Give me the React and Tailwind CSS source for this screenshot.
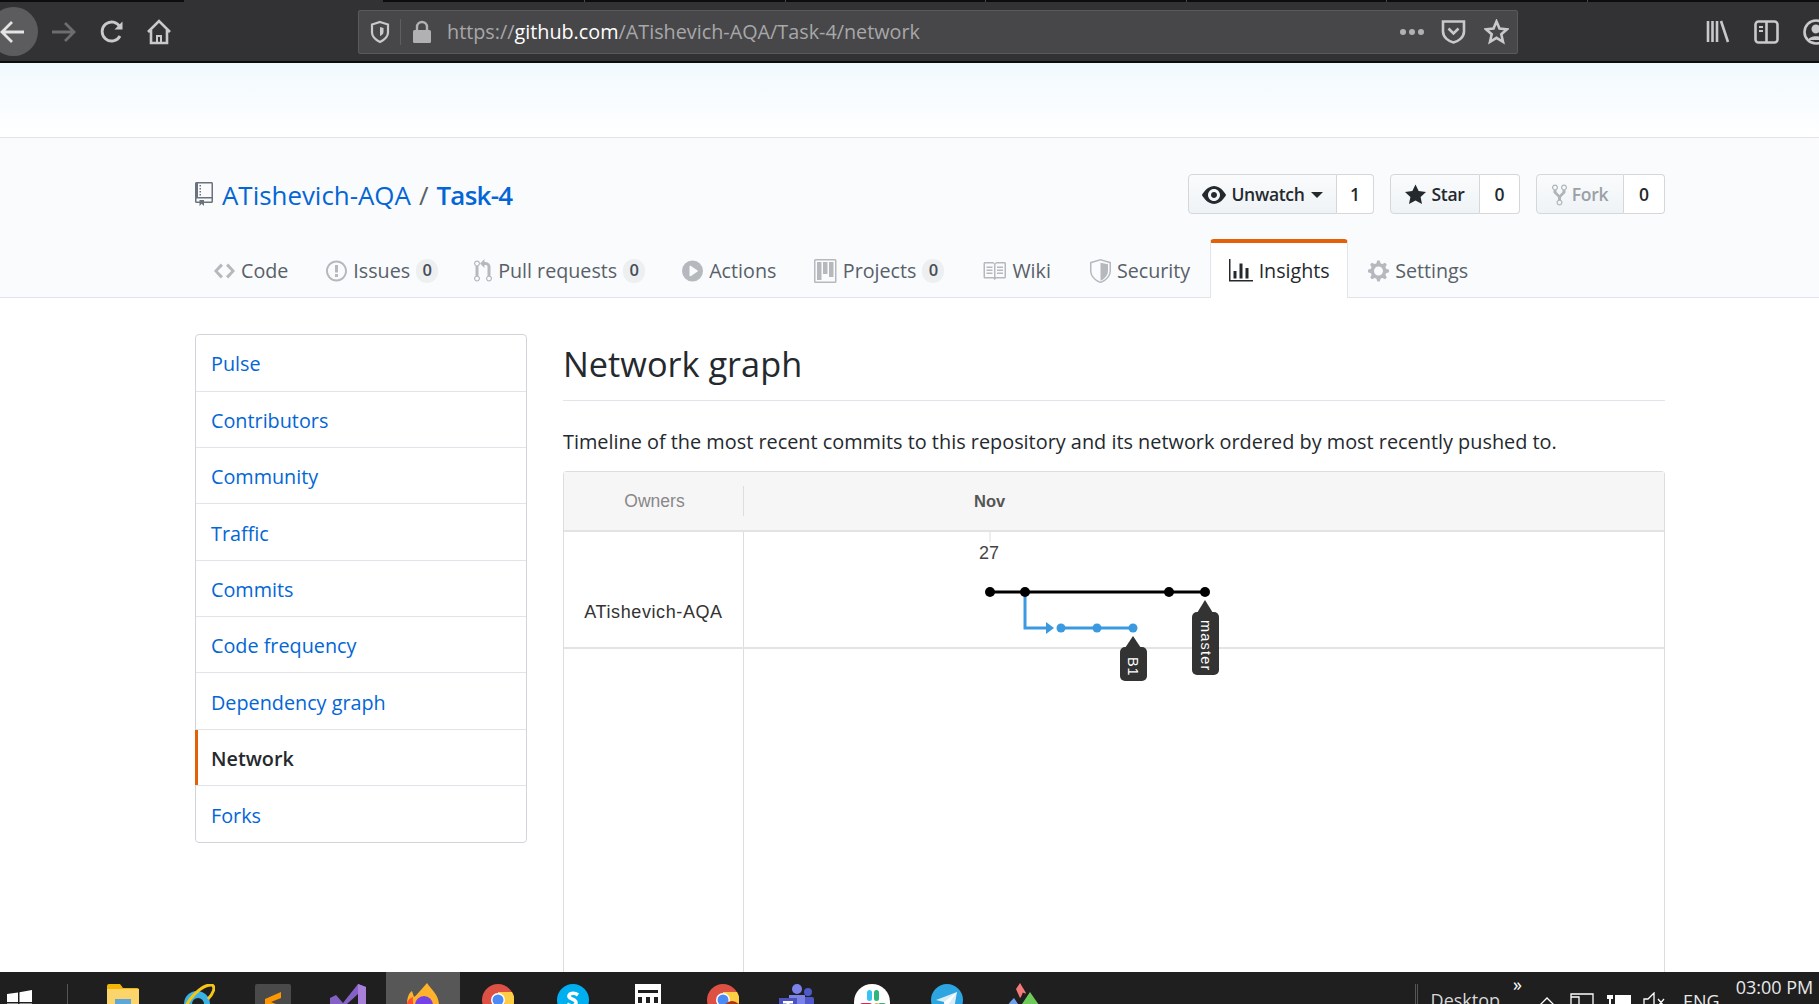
import React from "react";

const Oct = ({ d, w = 16, h = 16, className = "", size = 24 }) => (
  <svg viewBox={`0 0 ${w} ${h}`} width={(size * w) / h} height={size} className={`shrink-0 fill-current ${className}`}>
    <path d={d} fillRule="evenodd" />
  </svg>
);

const P = {
  repo: "M4 9H3V8h1v1zm0-3H3v1h1V6zm0-2H3v1h1V4zm0-2H3v1h1V2zm8-1v12c0 .55-.45 1-1 1H6v2l-1.5-1.5L3 16v-2H1c-.55 0-1-.45-1-1V1c0-.55.45-1 1-1h10c.55 0 1 .45 1 1zm-1 10H1v2h2v-1h3v1h5v-2zm0-10H2v9h9V1z",
  code: "M9.5 3L8 4.5 11.5 8 8 11.5 9.5 13 14 8 9.5 3zm-5 0L0 8l4.5 5L6 11.5 2.5 8 6 4.5 4.5 3z",
  issue: "M7 2.3c3.14 0 5.7 2.56 5.7 5.7s-2.56 5.7-5.7 5.7A5.71 5.71 0 011.3 8c0-3.14 2.56-5.7 5.7-5.7zM7 1C3.14 1 0 4.14 0 8s3.14 7 7 7 7-3.14 7-7-3.14-7-7-7zm1 3H6v5h2V4zm0 6H6v2h2v-2z",
  pr: "M11 11.28V5c-.03-.78-.34-1.47-.94-2.06C9.46 2.35 8.78 2.03 8 2H7V0L4 3l3 3V4h1c.27.02.48.11.69.31.21.2.3.42.31.69v6.28A1.993 1.993 0 0010 15a1.993 1.993 0 001-3.72zm-1 2.92c-.66 0-1.2-.55-1.2-1.2 0-.65.55-1.2 1.2-1.2.65 0 1.2.55 1.2 1.2 0 .65-.55 1.2-1.2 1.2zM4 3c0-1.11-.89-2-2-2a1.993 1.993 0 00-1 3.72v6.56A1.993 1.993 0 002 15a1.993 1.993 0 001-3.72V4.72c.59-.34 1-.98 1-1.72zm-.8 10c0 .66-.55 1.2-1.2 1.2-.65 0-1.2-.55-1.2-1.2 0-.65.55-1.2 1.2-1.2.65 0 1.2.55 1.2 1.2zM2 4.2C1.34 4.2.8 3.65.8 3c0-.65.55-1.2 1.2-1.2.65 0 1.2.55 1.2 1.2 0 .65-.55 1.2-1.2 1.2z",
  play: "M14 8A7 7 0 110 8a7 7 0 0114 0zm-8.223 3.482l4.599-3.066a.5.5 0 000-.832L5.777 4.518A.5.5 0 005 4.934v6.132a.5.5 0 00.777.416z",
  project: "M10 12h3V2h-3v10zm-4-2h3V2H6v8zm-4 4h3V2H2v12zm-1 1h13V1H1v14zM14 0H1a1 1 0 00-1 1v14a1 1 0 001 1h13a1 1 0 001-1V1a1 1 0 00-1-1z",
  book: "M3 5h4v1H3V5zm0 3h4V7H3v1zm0 2h4V9H3v1zm11-5h-4v1h4V5zm0 2h-4v1h4V7zm0 2h-4v1h4V9zm2-6v9c0 .55-.45 1-1 1H9.5l-1 1-1-1H2c-.55 0-1-.45-1-1V3c0-.55.45-1 1-1h5.5l1 1 1-1H15c.55 0 1 .45 1 1zm-8 .5L7.5 3H2v9h6V3.5zm7-.5H9.5l-.5.5V12h6V3z",
  shield: "M7 0L0 2v6.02C0 12.69 5.31 16 7 16c1.69 0 7-3.31 7-7.98V2L7 0zm0 1.05L13 2.77v5.25C13 12 8.4 14.9 7 15c-1.4-.1-6-3-6-6.98V2.77L7 1.05zM7 2.5v12C8.5 14 12 11.5 12 8V3.5L7 2.5z",
  graph: "M16 14v1H0V0h1v14h15zM5 13H3V8h2v5zm4 0H7V3h2v10zm4 0h-2V6h2v7z",
  gear: "M14 8.77v-1.6l-1.94-.64-.45-1.09.88-1.84-1.13-1.13-1.81.91-1.09-.45-.69-1.92h-1.6l-.63 1.94-1.11.45-1.84-.88-1.13 1.13.91 1.81-.45 1.09L0 7.23v1.59l1.94.64.45 1.09-.88 1.84 1.13 1.13 1.81-.91 1.09.45.69 1.92h1.59l.63-1.94 1.11-.45 1.84.88 1.13-1.13-.92-1.81.47-1.09L14 8.75v.02zM7 11c-1.66 0-3-1.34-3-3s1.34-3 3-3 3 1.34 3 3-1.34 3-3 3z",
  eye: "M8.06 2C3 2 0 8 0 8s3 6 8.06 6C13 14 16 8 16 8s-3-6-7.94-6zM8 12c-2.2 0-4-1.78-4-4 0-2.2 1.8-4 4-4 2.22 0 4 1.8 4 4 0 2.22-1.78 4-4 4zm2-4c0 1.11-.89 2-2 2-1.11 0-2-.89-2-2 0-1.11.89-2 2-2 1.11 0 2 .89 2 2z",
  star: "M14 6l-4.9-.64L7 1 4.9 5.36 0 6l3.6 3.26L2.67 14 7 11.67 11.33 14l-.93-4.74L14 6z",
  fork: "M8 1a1.993 1.993 0 00-1 3.72V6L5 8 3 6V4.72A1.993 1.993 0 002 1a1.993 1.993 0 00-1 3.72V6.5l3 3v1.78A1.993 1.993 0 005 15a1.993 1.993 0 001-3.72V9.5l3-3V4.72A1.993 1.993 0 008 1zM2 4.2C1.34 4.2.8 3.65.8 3c0-.65.55-1.2 1.2-1.2.65 0 1.2.55 1.2 1.2 0 .65-.55 1.2-1.2 1.2zm3 10c-.66 0-1.2-.55-1.2-1.2 0-.65.55-1.2 1.2-1.2.65 0 1.2.55 1.2 1.2 0 .65-.55 1.2-1.2 1.2zm3-10c-.66 0-1.2-.55-1.2-1.2 0-.65.55-1.2 1.2-1.2.65 0 1.2.55 1.2 1.2 0 .65-.55 1.2-1.2 1.2z",
};

const Tool = ({ w, h = 26, children, className = "" }) => (
  <svg viewBox={`0 0 ${w} ${h}`} width={w} height={h} className={`shrink-0 ${className}`} fill="none" stroke="#c9c9ca" strokeWidth="2.6">
    {children}
  </svg>
);

function TabStrip() {
  const segs = [
    ["w-[184px]", "bg-[#0c0c0d]"],
    ["w-[199px]", "bg-[#323234]"],
    ["w-[201px]", "bg-[#0c0c0d]"],
    ["w-[201px]", "bg-[#0c0c0d] border-l border-[#4a4a4a]"],
    ["w-[200px]", "bg-[#0c0c0d] border-l border-[#4a4a4a]"],
    ["w-[201px]", "bg-[#0c0c0d] border-l border-[#4a4a4a]"],
    ["w-[200px]", "bg-[#0c0c0d] border-l border-[#4a4a4a]"],
    ["w-[201px]", "bg-[#0c0c0d] border-l border-[#4a4a4a]"],
    ["flex-1", "bg-[#0c0c0d] border-l border-[#4a4a4a]"],
  ];
  return (
    <div className="flex h-[2px] shrink-0">
      {segs.map(([w, c], i) => (
        <div key={i} className={`${w} ${c}`} />
      ))}
    </div>
  );
}

function Toolbar() {
  return (
    <div className="relative flex h-[61px] shrink-0 items-center border-b-2 border-[#0c0c0d] bg-[#323234]">
      <div className="absolute left-[-11px] top-[5px] h-[49px] w-[49px] rounded-full bg-[#5c5c5e]" />
      <svg viewBox="0 0 28 26" width="28" height="26" className="relative ml-[-1px] shrink-0" fill="none" stroke="#e4e4e4" strokeWidth="2.8">
        <path d="M25 13H3M13 3L3 13l10 10" />
      </svg>
      <svg viewBox="0 0 26 26" width="26" height="26" className="ml-[24px] shrink-0" fill="none" stroke="#6d6d6f" strokeWidth="2.8">
        <path d="M1 13h22M14 4l9 9-9 9" />
      </svg>
      <Tool w={24} className="ml-[23px]">
        <path d="M20 17a9.5 9.5 0 1 1 0-9" strokeWidth="2.8" />
        <path d="M22.5 2.5v8h-8z" fill="#c9c9ca" stroke="none" />
      </Tool>
      <Tool w={26} className="ml-[22px]">
        <path d="M2 13L13 2l11 11M5 11v13h16V11" />
        <path d="M11 24v-7h4v7" strokeWidth="2" />
      </Tool>
      <div className="ml-[186px] flex h-[44px] w-[1160px] shrink-0 items-center rounded-[2px] border border-[#5a5a5c] bg-[#474749]">
        <Tool w={20} h={24} className="ml-[11px]">
          <path d="M10 2l8 2.5v8c0 5-5 8-8 9.5-3-1.500-8-4.500-8-9.500v-8z" strokeWidth="2.2" />
          <path d="M10 7l3.500 1v4c0 2-2 3.500-3.500 4z" fill="#c9c9ca" stroke="none" />
        </Tool>
        <div className="ml-[10px] h-[26px] w-px bg-[#5f5f61]" />
        <svg viewBox="0 0 20 24" width="20" height="24" className="ml-[11px] shrink-0">
          <path d="M5 10V7a5 5 0 0 1 10 0v3" fill="none" stroke="#b1b1b3" strokeWidth="2.400" />
          <rect x="1" y="10" width="18" height="13" rx="1.500" fill="#b1b1b3" />
        </svg>
        <div className="ml-[15px] mt-[1px] whitespace-nowrap font-['Open_Sans',sans-serif] text-[19.800px] text-[#a8a8aa]">
          https://<span className="text-white">github.com</span>/ATishevich-AQA/Task-4/network
        </div>
        <div className="ml-auto flex items-center">
          <svg viewBox="0 0 24 6" width="24" height="6" className="shrink-0" fill="#b1b1b3">
            <circle cx="3" cy="3" r="3" /><circle cx="12" cy="3" r="3" /><circle cx="21" cy="3" r="3" />
          </svg>
          <Tool w={25} className="ml-[17px]">
            <path d="M2 2.500h21v10c0 6-6 10-10.500 11C8 22.500 2 18.500 2 12.500z" />
            <path d="M7.500 9.500l5 5 5-5" />
          </Tool>
          <Tool w={25} className="ml-[18px] mr-[8px]">
            <path d="M12.500 2.500l3 7 7.500.8-5.700 5 1.700 7.500-6.500-4-6.500 4 1.700-7.500-5.700-5 7.500-.8z" />
          </Tool>
        </div>
      </div>
      <Tool w={25} className="ml-[188px]">
        <path d="M2 2v21M6.500 2v21M11 2v21M15 2l7 21" />
      </Tool>
      <Tool w={25} className="ml-[23px]">
        <rect x="1.500" y="2.500" width="22" height="21" rx="3" />
        <path d="M12.500 3v20" />
        <path d="M5 8h4M5 12h4" strokeWidth="2" />
      </Tool>
      <Tool w={26} className="ml-[24px]">
        <circle cx="13" cy="13" r="11.500" />
        <circle cx="13" cy="10" r="4.500" fill="#c9c9ca" stroke="none" />
        <path d="M5 21c2-5 14-5 16 0" fill="#c9c9ca" stroke="none" />
      </Tool>
    </div>
  );
}

function Badge({ children }) {
  return (
    <span className="ml-[6px] flex h-[24px] w-[22px] items-center justify-center rounded-full bg-[#eeeff1] text-[16.500px] font-semibold text-[#444d56]">
      {children}
    </span>
  );
}

function Tab({ icon, w, size = 24, label, badge, cls }) {
  return (
    <div className={`flex h-[58px] items-center pt-[5px] text-[19.700px] text-[#586069] ${cls}`}>
      <Oct d={icon} w={w} size={size} className="text-[#b5b9be]" />
      <span className="ml-[6px]">{label}</span>
      {badge != null && <Badge>{badge}</Badge>}
    </div>
  );
}

function HeadBtn({ icon, iw, label, count, caret, disabled, wBtn, wCount }) {
  return (
    <div className="flex h-[40px] text-[17.500px] font-semibold">
      <div
        className={`flex ${wBtn} items-center justify-center rounded-l-[4px] border border-[#d5d7da] bg-gradient-to-b from-[#fafbfc] to-[#eff3f6] pt-[1px] ${disabled ? "text-[#9aa0a6]" : "text-[#24292e]"}`}
      >
        <Oct d={icon} w={iw} size={24} className={disabled ? "text-[#b0b4b9]" : "text-[#24292e]"} />
        <span className="ml-[5px] tracking-[-0.3px]">{label}</span>
        {caret && <span className="ml-[6px] h-0 w-0 border-x-[6px] border-t-[6px] border-x-transparent border-t-[#24292e]" />}
      </div>
      <div className={`flex ${wCount} items-center justify-center rounded-r-[4px] border border-l-0 border-[#d5d7da] bg-white pt-[1px] text-[#24292e]`}>
        {count}
      </div>
    </div>
  );
}

function RepoHead() {
  return (
    <div className="shrink-0 border-b border-[#e1e4e8] bg-[#fafbfc]">
      <div className="ml-[195px] w-[1470px]">
        <div className="mt-[36px] flex h-[40px] items-center justify-between">
          <div className="flex items-center pt-[2px] text-[25.900px] text-[#0366d6]">
            <Oct d={P.repo} w={12} size={24} className="mb-[3px] mr-[9px] text-[#6a737d]" />
            <span>ATishevich-AQA</span>
            <span className="mx-[8px] text-[#586069]">/</span>
            <span className="font-semibold tracking-[-0.7px]">Task-4</span>
          </div>
          <div className="flex gap-[16px]">
            <HeadBtn icon={P.eye} iw={16} label="Unwatch" count="1" caret wBtn="w-[149px]" wCount="w-[37px]" />
            <HeadBtn icon={P.star} iw={14} label="Star" count="0" wBtn="w-[90px]" wCount="w-[40px]" />
            <HeadBtn icon={P.fork} iw={10} label="Fork" count="0" disabled wBtn="w-[88px]" wCount="w-[41px]" />
          </div>
        </div>
        <div className="mt-[25px] flex h-[58px] items-end">
          <Tab cls="ml-[19px]" icon={P.code} w={14} size={24} label="Code" />
          <Tab cls="ml-[38px]" icon={P.issue} w={14} label="Issues" badge="0" />
          <Tab cls="ml-[36px]" icon={P.pr} w={12} label="Pull requests" badge="0" />
          <Tab cls="ml-[37px]" icon={P.play} w={14} label="Actions" />
          <Tab cls="ml-[38px]" icon={P.project} w={15} label="Projects" badge="0" />
          <Tab cls="ml-[38px]" icon={P.book} w={16} label="Wiki" />
          <Tab cls="ml-[39px]" icon={P.shield} w={14} label="Security" />
          <div className="relative z-10 mb-[-1px] ml-[20px] flex h-[59px] w-[138px] items-center justify-center rounded-t-[4px] border-x border-t-[4px] border-x-[#e1e4e8] border-t-[#e36209] bg-white text-[19.700px] text-[#24292e]">
            <Oct d={P.graph} w={16} size={24} className="text-[#24292e]" />
            <span className="ml-[6px]">Insights</span>
          </div>
          <Tab cls="ml-[20px]" icon={P.gear} w={14} label="Settings" />
        </div>
      </div>
    </div>
  );
}

function Sidebar() {
  const items = ["Pulse", "Contributors", "Community", "Traffic", "Commits", "Code frequency", "Dependency graph", "Network", "Forks"];
  return (
    <div className="w-[332px] shrink-0 self-start rounded-[4px] border border-[#d1d5da] bg-white text-[19.800px]">
      {items.map((t, i) => {
        const active = t === "Network";
        return (
          <div
            key={t}
            className={`flex items-center pl-[15px] ${i ? "h-[56.400px] border-t border-[#e1e4e8] pt-[3px]" : "h-[55.500px] pt-[2px]"} ${active ? "relative font-semibold text-[#24292e]" : "text-[#0366d6]"}`}
          >
            {active && <span className="absolute bottom-0 left-[-1px] top-0 w-[3px] bg-[#e36209]" />}
            {t}
          </div>
        );
      })}
    </div>
  );
}

function Graph() {
  const black = [246, 281, 425, 461];
  const blue = [317, 353, 389];
  return (
    <svg width="921" height="180" viewBox="0 0 921 180" className="absolute left-[180px] top-0" style={{ fontFamily: "'Liberation Sans', sans-serif" }}>
      <path d="M246 0v10" stroke="#dddddd" strokeWidth="1" />
      <text x="245" y="27" textAnchor="middle" fontSize="18" fill="#444">27</text>
      <path d="M281 60v36h22" fill="none" stroke="#3b99e0" strokeWidth="3" />
      <path d="M302 90l8 6-8 6z" fill="#3b99e0" />
      <path d="M317 96h72" stroke="#3b99e0" strokeWidth="3" />
      {blue.map((x) => <circle key={x} cx={x} cy="96" r="4.500" fill="#3b99e0" />)}
      <path d="M246 60h215" stroke="#000" strokeWidth="3" />
      {black.map((x) => <circle key={x} cx={x} cy="60" r="5" fill="#000" />)}
      <path d="M461 68l-8 13h16z" fill="#333" />
      <rect x="448" y="80" width="27" height="63" rx="5" fill="#333" />
      <text transform="translate(457 88) rotate(90)" fontSize="14.500" letterSpacing="1.200" fill="#fff">master</text>
      <path d="M389 104l-8 12h16z" fill="#333" />
      <rect x="376" y="115" width="27" height="34" rx="5" fill="#333" />
      <text transform="translate(384 125) rotate(90)" fontSize="14.500" letterSpacing="0.800" fill="#fff">B1</text>
    </svg>
  );
}

function Main() {
  return (
    <div className="ml-[36px] flex h-full min-h-0 w-[1102px] shrink-0 flex-col">
      <h2 className="flex h-[67px] shrink-0 items-center border-b border-[#e1e4e8] pb-[7px] text-[34.300px] font-normal text-[#24292e]">Network graph</h2>
      <p className="mt-[24px] h-[46px] shrink-0 pt-[3px] text-[19.860px] leading-[28px] text-[#24292e]">
        Timeline of the most recent commits to this repository and its network ordered by most recently pushed to.
      </p>
      <div className="flex min-h-0 flex-1 flex-col rounded-t-[4px] border-x border-t border-[#dddddd] font-['Liberation_Sans',sans-serif]">
        <div className="flex h-[60px] shrink-0 items-center border-b-2 border-[#e3e3e3] bg-[#f6f6f6]">
          <div className="flex h-[30px] w-[180px] shrink-0 items-center justify-center border-r border-[#dddddd] pl-[2px] text-[17.500px] text-[#888888]">Owners</div>
          <div className="ml-[230px] text-[16.500px] font-bold text-[#555555]">Nov</div>
        </div>
        <div className="relative flex min-h-0 flex-1 flex-col">
          <div className="flex h-[117px] shrink-0 border-b-2 border-[#e3e3e3]">
            <div className="flex w-[180px] shrink-0 items-end justify-center border-r border-[#dddddd] pb-[21px] text-[18px] tracking-[0.6px] text-[#333333]">ATishevich-AQA</div>
          </div>
          <div className="flex-1">
            <div className="h-full w-[180px] border-r border-[#dddddd]" />
          </div>
          <Graph />
        </div>
      </div>
    </div>
  );
}

const Slot = ({ active, children }) => (
  <div className={`flex h-[32px] w-[74.900px] shrink-0 justify-center overflow-hidden pt-[12px] ${active ? "bg-[#575757]" : ""}`}>{children}</div>
);

const Chrome = ({ badge }) => (
  <svg viewBox="0 0 32 32" width="32" height="32" className="shrink-0">
    <circle cx="16" cy="16" r="16" fill="#dd5144" />
    <path d="M16 16L2 24a16 16 0 0 0 14 8z" fill="#1da462" />
    <path d="M16 16l14 8A16 16 0 0 0 30 8H16z" fill="#ffcd46" />
    <circle cx="16" cy="16" r="7" fill="#fff" />
    <circle cx="16" cy="16" r="5.500" fill="#4c8bf5" />
    {badge && <circle cx="25" cy="26" r="9" fill="#a8370f" />}
  </svg>
);

function Taskbar() {
  return (
    <div className="relative flex h-[32px] shrink-0 overflow-hidden bg-[#1f1f20] font-['Open_Sans',sans-serif] text-white">
      <svg viewBox="0 0 26 26" width="26" height="26" className="ml-[7px] mt-[18px] shrink-0" fill="#fff">
        <path d="M0 4l11-1.500V12H0zM12.500 2.200L25 0v12H12.500zM0 13.500h11V23L0 21.500zM12.500 13.500H25V25l-12.500-2z" />
      </svg>
      <div className="ml-[34px] mt-[12px] h-[20px] w-px bg-[#555]" />
      <div className="ml-[18px] flex">
        <Slot>
          <svg viewBox="0 0 32 32" width="32" height="32">
            <path d="M0 2q0-2 2-2h11l3 4h14q2 0 2 2v26H0z" fill="#f2b705" />
            <rect x="0" y="5" width="32" height="27" fill="#fbd56c" />
            <rect x="8" y="15" width="16" height="6" fill="#5da6d8" />
          </svg>
        </Slot>
        <Slot>
          <svg viewBox="0 0 34 34" width="34" height="34">
            <circle cx="16" cy="20" r="13" fill="#3ab2e6" />
            <circle cx="17" cy="20" r="6" fill="#1f1f20" />
            <rect x="9" y="21" width="17" height="4" fill="#3ab2e6" />
            <path d="M2 30C6 14 22 0 31 1c4 2 1 9-4 14" fill="none" stroke="#f5c518" strokeWidth="3" />
          </svg>
        </Slot>
        <Slot>
          <div className="flex h-[36px] w-[36px] shrink-0 justify-center rounded-[2px] bg-[#4a4a4a] pt-[8px]">
            <svg viewBox="0 0 20 28" width="20" height="28">
              <path d="M18 0L2 7v6l16 7v-6L8 10l10-4zM2 18l16 7v-5z" fill="#ff9800" />
            </svg>
          </div>
        </Slot>
        <Slot>
          <svg viewBox="0 0 36 36" width="36" height="36" className="shrink-0">
            <path d="M0 14l6-3 7 8L28 0l8 3v30l-8 3-16-16-6 5-6-3z" fill="#8661c5" />
            <path d="M28 0l8 3v30l-8 3z" fill="#a97fdc" />
            <path d="M28 10L17 20l11 8z" fill="#1f1f20" />
          </svg>
        </Slot>
        <Slot active>
          <svg viewBox="0 0 36 36" width="36" height="36" className="mt-[-1px] shrink-0">
            <path d="M22 0c4 6 12 12 12 22A16 16 0 0 1 2 22C2 14 4 10 7 8l2 6c3-2 4-4 13-14z" fill="#ffb32c" />
            <circle cx="19" cy="22" r="9" fill="#7542e5" />
            <path d="M2 20a16 16 0 0 0 18 14C10 30 7 22 8 14 5 15 3 17 2 20z" fill="#ff4f2d" />
          </svg>
        </Slot>
        <Slot><Chrome /></Slot>
        <Slot>
          <svg viewBox="0 0 32 32" width="32" height="32">
            <circle cx="16" cy="16" r="16" fill="#00aff0" />
            <path d="M21 11q-4-3-8-1-3 3 2 5 6 2 3 6-4 2-8-1" fill="none" stroke="#fff" strokeWidth="3.500" />
          </svg>
        </Slot>
        <Slot>
          <div className="h-[28px] w-[26px] shrink-0 bg-white px-[3px] pt-[6px]">
            <div className="h-[3px] w-full bg-[#1f1f20]" />
            <div className="mt-[4px] flex justify-between">
              <span className="h-[6px] w-[4px] bg-[#1f1f20]" />
              <span className="h-[6px] w-[4px] bg-[#1f1f20]" />
              <span className="h-[6px] w-[4px] bg-[#1f1f20]" />
            </div>
          </div>
        </Slot>
        <Slot><Chrome badge /></Slot>
        <Slot>
          <svg viewBox="0 0 36 32" width="36" height="32">
            <circle cx="18" cy="5" r="5" fill="#7b83eb" />
            <circle cx="29" cy="8" r="4" fill="#5059c9" />
            <rect x="20" y="13" width="15" height="16" rx="2" fill="#5059c9" />
            <rect x="10" y="11" width="16" height="18" fill="#7b83eb" />
            <rect x="0" y="14" width="18" height="18" fill="#4b53bc" />
            <path d="M4 17h10v2.500h-3.500V30h-3V19.500H4z" fill="#fff" />
          </svg>
        </Slot>
        <Slot>
          <svg viewBox="0 0 36 36" width="36" height="36" className="shrink-0">
            <circle cx="18" cy="18" r="18" fill="#fff" />
            <rect x="13" y="6" width="5" height="11" rx="2.500" fill="#36c5f0" />
            <rect x="20" y="6" width="5" height="11" rx="2.500" fill="#2eb67d" />
            <rect x="24" y="19" width="8" height="5" rx="2.500" fill="#2eb67d" />
            <rect x="6" y="19" width="12" height="5" rx="2.500" fill="#e01e5a" />
            <rect x="20" y="19" width="5" height="11" rx="2.500" fill="#ecb22e" />
          </svg>
        </Slot>
        <Slot>
          <svg viewBox="0 0 32 32" width="32" height="32">
            <circle cx="16" cy="16" r="16" fill="#2ca5e0" />
            <path d="M5 16l21-8-3 17-6-4-3 3-1-6z" fill="#d9edf8" />
            <path d="M13 18l13-10-9 13-3 3z" fill="#fff" />
          </svg>
        </Slot>
        <Slot>
          <svg viewBox="0 0 36 32" width="36" height="32" className="mt-[-1px]">
            <path d="M16 0l6 10-6 5-4-9z" fill="#f47a7a" />
            <path d="M10 15l6 9-8 8H2q-2-8 8-17z" fill="#6fa0e8" />
            <path d="M26 9l9 13-8 10h-8l-3-8z" fill="#6fc95b" />
            <path d="M20 10l-5 12" stroke="#1f1f20" strokeWidth="2.500" />
          </svg>
        </Slot>
      </div>
      <div className="ml-[355px] mt-[12px] h-[20px] w-[3px] border-x border-[#555]" />
      <div className="ml-[13px] mt-[14px] shrink-0 text-[18px] leading-[28px] text-[#d8d8d8]">Desktop</div>
      <div className="ml-[13px] shrink-0 text-[18px] leading-[24px]">»</div>
      <svg viewBox="0 0 18 10" width="18" height="10" className="ml-[16px] mt-[25px] shrink-0" fill="none" stroke="#fff" strokeWidth="1.300">
        <path d="M1 9l8-8 8 8" />
      </svg>
      <svg viewBox="0 0 24 12" width="24" height="12" className="ml-[14px] mt-[21px] shrink-0" fill="none" stroke="#fff" strokeWidth="1.300">
        <path d="M1 12V1h22v11M1 4h8v8" />
      </svg>
      <svg viewBox="0 0 24 14" width="24" height="14" className="ml-[13px] mt-[19px] shrink-0" fill="#fff">
        <rect x="8" y="4" width="16" height="10" />
        <path d="M1 0v4M5 0v4M0 4h6v4H4v6H2V8H0z" />
      </svg>
      <svg viewBox="0 0 24 14" width="24" height="14" className="ml-[12px] mt-[20px] shrink-0" fill="none" stroke="#fff" strokeWidth="1.300">
        <path d="M1 14V7h4l6-6v13M15 7l6 7M21 7l-6 7" />
      </svg>
      <div className="ml-[16px] mt-[17px] shrink-0 text-[18px] leading-[24px] text-[#e8e8e8]">ENG</div>
      <div className="ml-[16px] mt-[2px] shrink-0 whitespace-nowrap text-[18px] leading-[26px] text-[#e8e8e8]">03:00 PM</div>
    </div>
  );
}

export default function App() {
  return (
    <div className="flex h-[1004px] w-[1819px] flex-col overflow-hidden bg-white font-['Open_Sans',sans-serif]">
      <TabStrip />
      <Toolbar />
      <div className="h-[75px] shrink-0 border-b border-[#e1e4e8] bg-gradient-to-b from-[#f1f9fe] to-white" />
      <RepoHead />
      <div className="flex min-h-0 flex-1 pl-[195px] pt-[36px]">
        <Sidebar />
        <Main />
      </div>
      <Taskbar />
    </div>
  );
}
